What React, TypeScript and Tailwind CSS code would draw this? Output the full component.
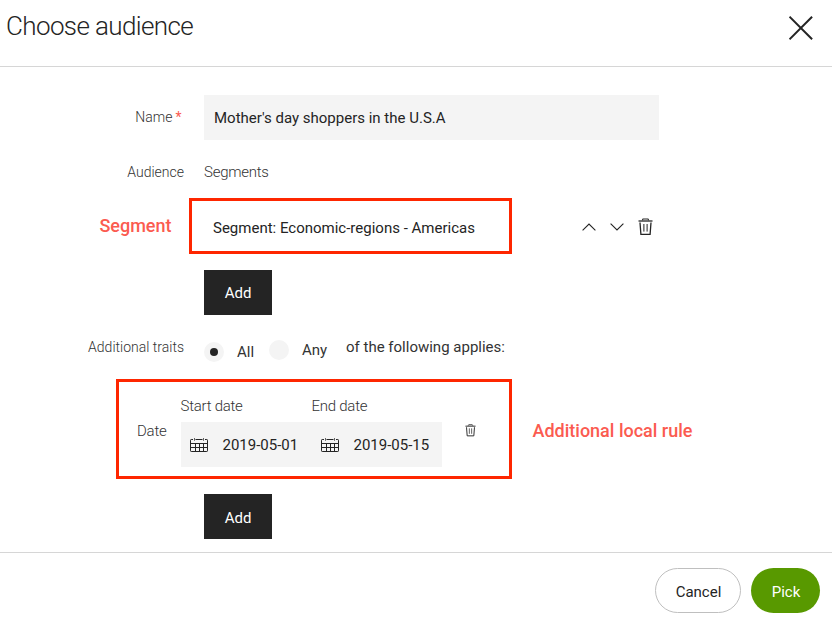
import type { ReactNode } from 'react';

function Trash({ className }: { className: string }) {
  return (
    <svg viewBox="0 0 15 18" className={className} fill="none" stroke="#242424">
      <path d="M4.3 2.3 5 1h5l.7 1.3" strokeWidth="1.1" />
      <path d="M.5 3h14" strokeWidth="1.3" />
      <path d="M2 4.5 2.9 16.4h9.2L13 4.5" strokeWidth="1.3" />
      <path d="M5.9 6v7.6M9.1 6v7.6" strokeWidth="1" />
    </svg>
  );
}

function Calendar() {
  return (
    <svg viewBox="0 0 18 14" className="h-[14px] w-[18px] shrink-0" fill="none" stroke="#242424">
      <path d="M3 1.5H1.2Q.5 1.5.5 2.2v10.6q0 .7.7.7h15.6q.7 0 .7-.7V2.2q0-.7-.7-.7H15M5.5 1.5h7" />
      <path d="M4.5 0v2.8M13.5 0v2.8" strokeOpacity="0.7" />
      <path d="M.5 5.5h17M.5 9.5h17" />
      <path d="M5.5 5.5v8M9.5 5.5v8M13.5 5.5v8" />
    </svg>
  );
}

function AddButton({ className }: { className: string }) {
  return (
    <button className={`block h-[45px] w-[68px] shrink-0 bg-[#242424] text-[15px] leading-[42px] text-white ${className}`}>
      Add
    </button>
  );
}

function Row({ label, className, children }: { label?: ReactNode; className: string; children: ReactNode }) {
  return (
    <div className={`flex shrink-0 ${className}`}>
      <div className="mr-5 w-[184px] shrink-0 text-right text-[14px] font-light text-[#333]">{label}</div>
      {children}
    </div>
  );
}

function DateField({ label, value, className }: { label: string; value: string; className: string }) {
  return (
    <div className={className}>
      <div className="-ml-[0.5px] h-[19px] text-[15px] leading-[18px] font-light tracking-[-0.25px] text-[#333]">
        {label}
      </div>
      <div className="mt-[6px] flex h-[45px] items-center bg-[#f4f4f4] pl-[9px]">
        <Calendar />
        <span className="ml-[14.5px] pt-[2px] text-[15px] whitespace-nowrap">{value}</span>
      </div>
    </div>
  );
}

export default function App() {
  return (
    <div className="flex h-[619px] w-[832px] flex-col overflow-hidden bg-white font-['Roboto',sans-serif] text-[#242424]">
      <header className="flex h-[67px] shrink-0 justify-between border-b border-[#d6d6d6] pr-[19px] pl-[6px]">
        <h1 className="mt-[10px] text-[26px] leading-[32px] font-light tracking-[-0.62px]">Choose audience</h1>
        <svg viewBox="0 0 24 24" className="mt-[16px] h-6 w-6" stroke="#242424" strokeWidth="2">
          <path d="M.5.7l22.6 22.6M23.1.7.5 23.3" />
        </svg>
      </header>

      <main className="flex h-[485px] shrink-0 flex-col pt-[28px]">
        <Row
          className="h-[45px] leading-[45px]"
          label={
            <span className="mr-[2.5px]">
              Name<span className="ml-[3px] font-normal text-[#fb5b50]">*</span>
            </span>
          }
        >
          <div className="w-[455px] bg-[#f4f4f4] pl-[10px] text-[15px] leading-[47px]">Mother's day shoppers in the U.S.A</div>
        </Row>

        <Row className="mt-[22px] h-5 leading-5" label="Audience">
          <span className="text-[15px] font-light tracking-[-0.25px] text-[#333]">Segments</span>
        </Row>

        <div className="mt-[16px] flex h-[56px] shrink-0 items-center">
          <span className="w-[189px] pr-[17.5px] pb-[2px] text-right text-[18px] font-medium text-[#fb5b50]">Segment</span>
          <div className="h-[56px] w-[323px] border-[3px] border-[#fe2600] pl-[21px] text-[15px] leading-[54px] whitespace-nowrap">
            Segment: Economic-regions - Americas
          </div>
          <div className="ml-[70px] flex items-center pt-[2px]">
            <svg viewBox="0 0 14 8" className="h-2 w-[14px]" fill="none" stroke="#242424" strokeWidth="1.1">
              <path d="M.6 7.3 7 1l6.4 6.3" />
            </svg>
            <svg viewBox="0 0 14 8" className="ml-[14px] h-2 w-[14px]" fill="none" stroke="#242424" strokeWidth="1.1">
              <path d="M.6.7 7 7l6.4-6.3" />
            </svg>
            <Trash className="ml-[14px] h-[18px] w-[15px]" />
          </div>
        </div>

        <Row className="mt-[16px]">
          <AddButton className="" />
        </Row>

        <Row className="mt-[20px] h-[30px] leading-[24px]" label="Additional traits">
          <div className="flex text-[15px] text-[#333]">
            <span className="mt-[7px] flex h-5 w-5 items-center justify-center rounded-full bg-[#f4f4f4]">
              <span className="h-2 w-2 rounded-full bg-[#242424]" />
            </span>
            <span className="mt-[5px] ml-[13px] w-[32px]">All</span>
            <span className="mt-[5px] h-5 w-5 rounded-full bg-[#f4f4f4]" />
            <span className="mt-[3px] ml-[13px] w-[44px]">Any</span>
            <span className="whitespace-nowrap">of the following applies:</span>
          </div>
        </Row>

        <div className="mt-[14px] ml-[116px] flex h-[100px] shrink-0 items-center">
          <div className="flex h-[100px] w-[396px] border-[3px] border-[#fe2600] pl-[18px]">
            <span className="mt-[39px] w-[44px] text-[15px] leading-5 font-light tracking-[-0.22px] text-[#333]">Date</span>
            <div className="mt-[15px] flex">
              <DateField className="w-[131px]" label="Start date" value="2019-05-01" />
              <DateField className="w-[130px]" label="End date" value="2019-05-15" />
            </div>
            <Trash className="mt-[42px] ml-[23px] h-[13px] w-[11px]" />
          </div>
          <span className="ml-[20.5px] pt-[2px] text-[18px] font-medium whitespace-nowrap text-[#fb5b50]">
            Additional local rule
          </span>
        </div>

        <Row className="mt-[15px]">
          <AddButton className="pt-[2px]" />
        </Row>
      </main>

      <footer className="flex h-[67px] shrink-0 justify-end gap-[10px] border-t border-[#d6d6d6] pt-[15px] pr-3 text-[15px]">
        <button className="h-[45px] w-[86px] rounded-full border border-[#bfbfbf] pt-[3px] pl-px">Cancel</button>
        <button className="h-[45px] w-[69px] rounded-full bg-[#589900] pt-[3px] pl-px text-white">Pick</button>
      </footer>
    </div>
  );
}
